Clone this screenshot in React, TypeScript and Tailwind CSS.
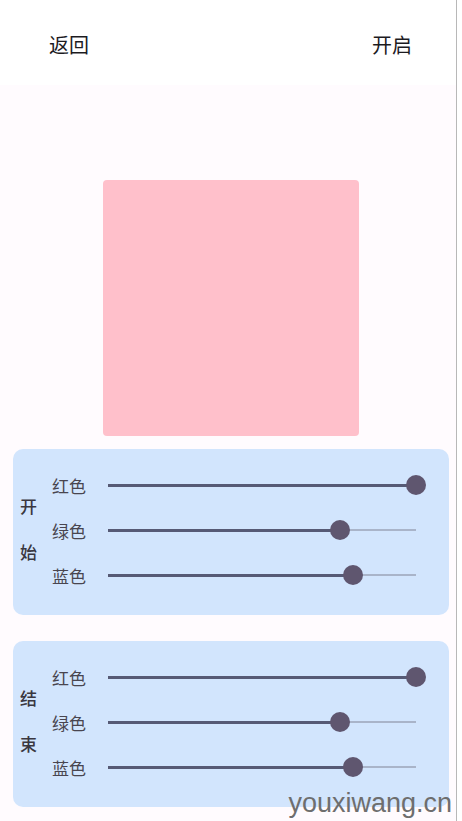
const font = { fontFamily: '"Noto Sans CJK SC", "Noto Sans", sans-serif' };

function Slider({ label, value }: { label: string; value: number }) {
  return (
    <div className="flex h-[45px] items-center">
      <span className="w-[56px] text-[17px] leading-none text-[#49454f]">{label}</span>
      <div className="relative h-[20px] w-[308px]">
        <div className="absolute left-0 right-0 top-[9px] h-[2px] bg-[#a9b4c9]" />
        <div
          className="absolute left-0 top-[8.5px] h-[3px] bg-[#565a75]"
          style={{ width: `${value * 100}%` }}
        />
        <div
          className="absolute top-0 h-[20px] w-[20px] -translate-x-1/2 rounded-full bg-[#5f566f]"
          style={{ left: `${value * 100}%` }}
        />
      </div>
    </div>
  );
}

function ColorCard({ title, values }: { title: [string, string]; values: number[] }) {
  return (
    <div className="flex h-[166px] items-center rounded-[10px] bg-[#d2e5fd] pl-[7px]">
      <div className="-mt-[8px] flex w-[32px] flex-col gap-[29px] text-[17px] font-medium leading-none text-[#3a3740]">
        <span>{title[0]}</span>
        <span>{title[1]}</span>
      </div>
      <div className="-mt-[4px] flex flex-col">
        <Slider label="红色" value={values[0]} />
        <Slider label="绿色" value={values[1]} />
        <Slider label="蓝色" value={values[2]} />
      </div>
    </div>
  );
}

export default function App() {
  const vals = [1, 0.753, 0.796];
  return (
    <div className="relative flex h-[821px] w-[462px] overflow-hidden bg-white" style={font}>
      <div className="flex h-full w-[457px] flex-col border-r border-[#b8b8b8] bg-[#fffbfe]">
        <header className="flex h-[85px] items-center justify-between bg-white pl-[49px] pr-[44px] pt-[4px] text-[20px] text-[#1c1b1f]">
          <span>返回</span>
          <span>开启</span>
        </header>
        <div className="flex justify-center pt-[95px]">
          <div className="ml-[5px] h-[256px] w-[256px] rounded-[4px] bg-[#ffc0cb]" />
        </div>
        <div className="flex flex-col gap-[26px] pl-[13px] pr-[7px] pt-[13px]">
          <ColorCard title={['开', '始']} values={vals} />
          <ColorCard title={['结', '束']} values={vals} />
        </div>
      </div>
      <div
        className="absolute bottom-[4px] right-[10px] text-[27px] leading-none text-[#6e6e6e]"
        style={{ fontFamily: '"Liberation Sans", Arial, sans-serif' }}
      >
        youxiwang.cn
      </div>
    </div>
  );
}
